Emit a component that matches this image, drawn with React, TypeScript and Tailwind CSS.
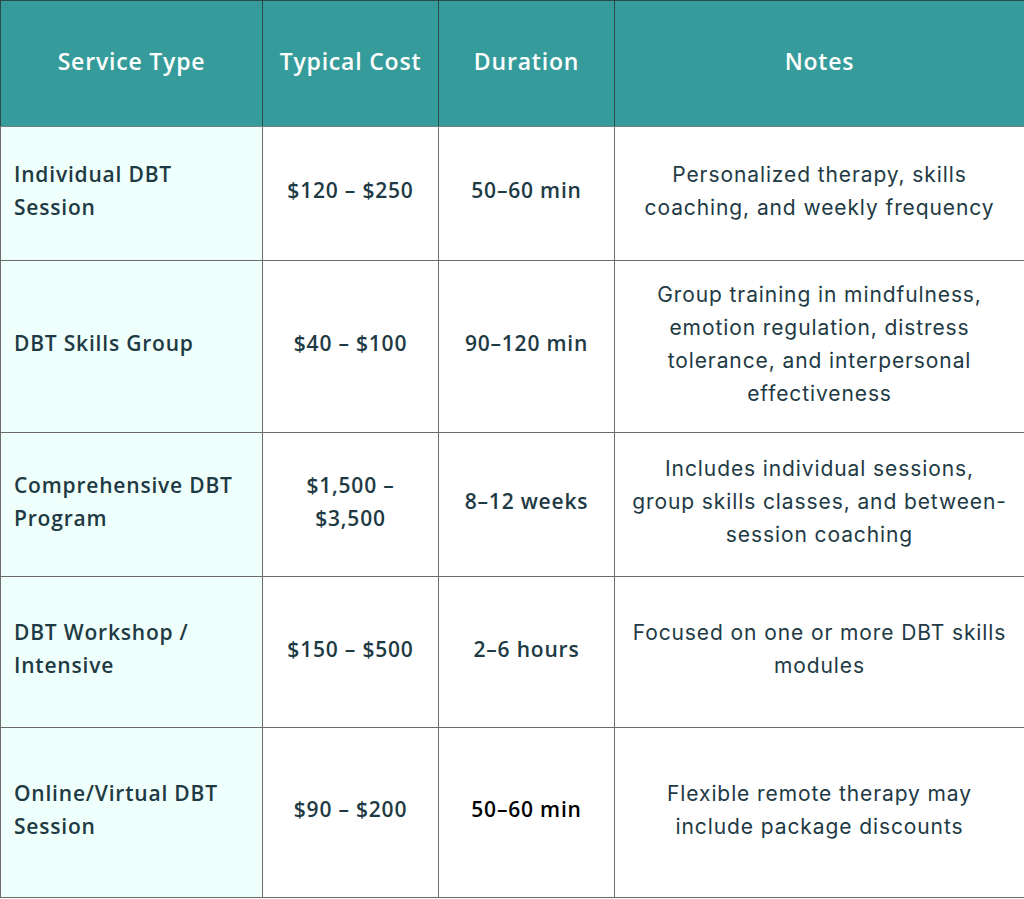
import React from 'react';

interface Row {
  service: string[];
  cost: string[];
  duration: string;
  notes: string[];
  height: string;
  durationBlack?: boolean;
}

const rows: Row[] = [
  {
    service: ['Individual DBT', 'Session'],
    cost: ['$120 – $250'],
    duration: '50–60 min',
    notes: ['Personalized therapy, skills', 'coaching, and weekly frequency'],
    height: 'h-[134px]',
  },
  {
    service: ['DBT Skills Group'],
    cost: ['$40 – $100'],
    duration: '90–120 min',
    notes: ['Group training in mindfulness,', 'emotion regulation, distress', 'tolerance, and interpersonal', 'effectiveness'],
    height: 'h-[172px]',
  },
  {
    service: ['Comprehensive DBT', 'Program'],
    cost: ['$1,500 –', '$3,500'],
    duration: '8–12 weeks',
    notes: ['Includes individual sessions,', 'group skills classes, and between-', 'session coaching'],
    height: 'h-[144px]',
  },
  {
    service: ['DBT Workshop /', 'Intensive'],
    cost: ['$150 – $500'],
    duration: '2–6 hours',
    notes: ['Focused on one or more DBT skills', 'modules'],
    height: 'h-[151px]',
  },
  {
    service: ['Online/Virtual DBT', 'Session'],
    cost: ['$90 – $200'],
    duration: '50–60 min',
    notes: ['Flexible remote therapy may', 'include package discounts'],
    height: 'h-[170px]',
    durationBlack: true,
  },
];

const Lines = ({ lines }: { lines: string[] }) => (
  <>
    {lines.map((l, i) => (
      <React.Fragment key={i}>
        {i > 0 && <br />}
        {l}
      </React.Fragment>
    ))}
  </>
);

export default function App() {
  return (
    <div className="w-[1024px] h-[899px] bg-white font-['Open_Sans','Liberation_Sans',sans-serif]">
      <table className="w-[1024px] border-collapse table-fixed text-[#1e3a44]">
        <colgroup>
          <col className="w-[262px]" />
          <col className="w-[176px]" />
          <col className="w-[176px]" />
          <col className="w-[410px]" />
        </colgroup>
        <thead>
          <tr className="h-[126px] bg-[#359c9b] text-white text-[23px] tracking-[0.8px]">
            <th className="border border-[#2c4a4a] border-b-[#6f7f7f] pb-[4px] font-semibold">Service Type</th>
            <th className="border border-[#2c4a4a] border-b-[#6f7f7f] pb-[4px] font-semibold">Typical Cost</th>
            <th className="border border-[#2c4a4a] border-b-[#6f7f7f] pb-[4px] font-semibold">Duration</th>
            <th className="border border-[#2c4a4a] border-b-[#6f7f7f] pb-[4px] font-semibold">Notes</th>
          </tr>
        </thead>
        <tbody>
          {rows.map((r, i) => (
            <tr key={i} className={r.height}>
              <td className="border border-[#6b6b6b] bg-[#effffb] pl-[13px] pr-1 pb-[6px] text-[21px] tracking-[0.8px] leading-[33px] font-semibold">
                <Lines lines={r.service} />
              </td>
              <td className="border border-[#6b6b6b] pb-[6px] text-center text-[21px] tracking-[0.8px] leading-[33px] font-semibold">
                <Lines lines={r.cost} />
              </td>
              <td className={`border border-[#6b6b6b] pb-[6px] text-center text-[21px] tracking-[0.8px] leading-[33px] font-semibold ${r.durationBlack ? 'text-black' : ''}`}>
                {r.duration}
              </td>
              <td className="border border-[#6b6b6b] pb-[6px] text-center text-[21px] tracking-[0.9px] leading-[33px] font-['Inter','Noto_Sans',sans-serif] font-normal">
                <Lines lines={r.notes} />
              </td>
            </tr>
          ))}
        </tbody>
      </table>
    </div>
  );
}
